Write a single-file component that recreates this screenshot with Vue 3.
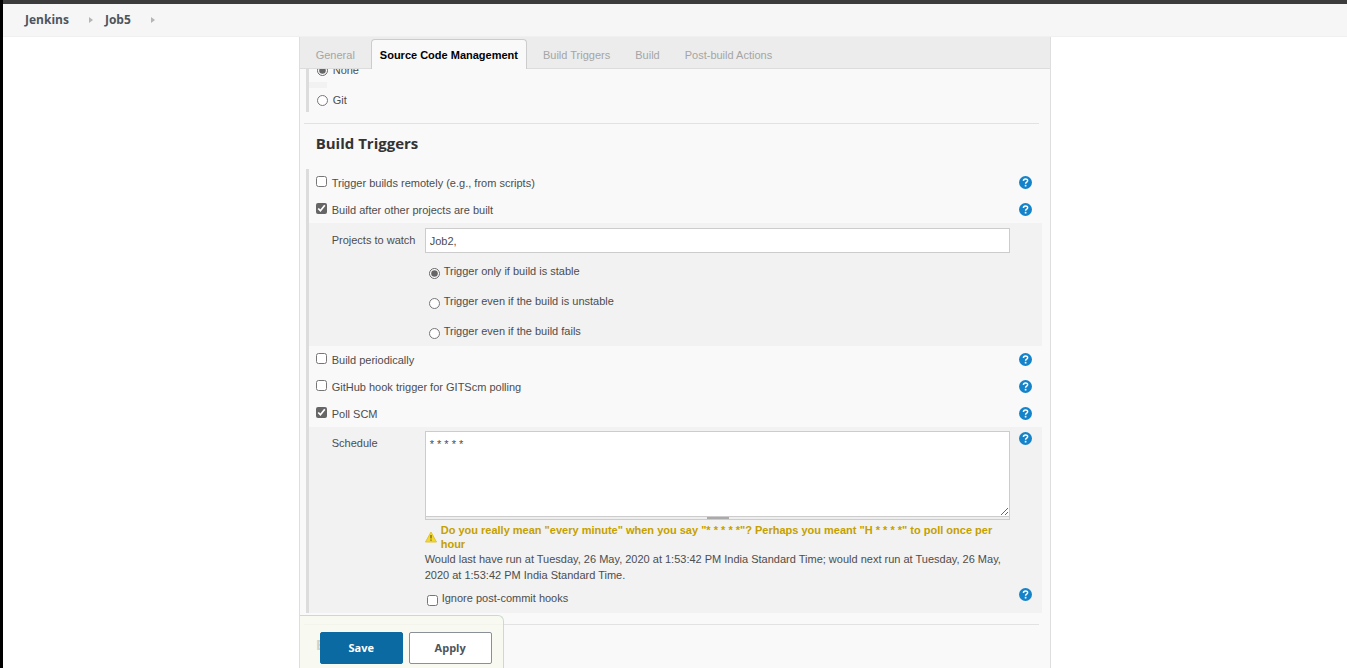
<script setup>
import { ref } from 'vue'

const crumbs = ['Jenkins', 'Job5']
const tabs = ['General', 'Source Code Management', 'Build Triggers', 'Build', 'Post-build Actions']
const activeTab = ref('Source Code Management')
const scm = ref('none')
const remote = ref(false)
const afterOthers = ref(true)
const projects = ref('Job2,')
const threshold = ref('stable')
const thresholds = [
  { id: 'stable', label: 'Trigger only if build is stable' },
  { id: 'unstable', label: 'Trigger even if the build is unstable' },
  { id: 'fails', label: 'Trigger even if the build fails' }
]
const periodic = ref(false)
const github = ref(false)
const poll = ref(true)
const schedule = ref('* * * * *')
const ignoreHooks = ref(false)
</script>

<template>
  <div class="page">
    <svg class="defs" aria-hidden="true">
      <symbol id="help" viewBox="0 0 14 14">
        <circle cx="7" cy="7" r="7" fill="#1583c9" />
        <path d="M4.8 5.3C4.8 2.6 9.3 2.7 9.3 5.1C9.3 6.7 7.1 6.6 7.1 8.4" fill="none" stroke="#fff" stroke-width="1.6" />
        <rect x="6.2" y="9.5" width="1.8" height="1.8" fill="#fff" />
      </symbol>
    </svg>
    <nav class="crumbs">
      <template v-for="c in crumbs" :key="c">
        <a href="#">{{ c }}</a>
        <svg class="arrow" viewBox="0 0 4 6" aria-hidden="true"><path d="M0 0L4 3L0 6Z" /></svg>
      </template>
    </nav>

    <main class="panel">
      <div class="tabs" role="tablist">
        <button
          v-for="t in tabs"
          :key="t"
          type="button"
          role="tab"
          :aria-selected="t === activeTab"
          :class="['tab', { active: t === activeTab }]"
          @click="activeTab = t"
        >{{ t }}</button>
      </div>

      <form class="content" @submit.prevent>
        <section class="group scm">
          <label class="scm-row"><input v-model="scm" type="radio" name="scm" value="none" />None</label>
          <div class="spacer"></div>
          <label class="scm-row"><input v-model="scm" type="radio" name="scm" value="git" />Git</label>
        </section>
        <hr />
        <h2>Build Triggers</h2>

        <section class="group">
          <div class="option">
            <label><input v-model="remote" type="checkbox" />Trigger builds remotely (e.g., from scripts)</label>
            <button type="button" class="help" aria-label="Help"><svg><use href="#help" /></svg></button>
          </div>
          <div class="option">
            <label><input v-model="afterOthers" type="checkbox" />Build after other projects are built</label>
            <button type="button" class="help" aria-label="Help"><svg><use href="#help" /></svg></button>
          </div>
          <div class="nested watch">
            <label class="name" for="projects">Projects to watch</label>
            <div class="field">
              <input id="projects" v-model="projects" class="text" type="text" />
              <label v-for="t in thresholds" :key="t.id" class="choice">
                <input v-model="threshold" type="radio" name="threshold" :value="t.id" />{{ t.label }}
              </label>
            </div>
          </div>
          <div class="option">
            <label><input v-model="periodic" type="checkbox" />Build periodically</label>
            <button type="button" class="help" aria-label="Help"><svg><use href="#help" /></svg></button>
          </div>
          <div class="option">
            <label><input v-model="github" type="checkbox" />GitHub hook trigger for GITScm polling</label>
            <button type="button" class="help" aria-label="Help"><svg><use href="#help" /></svg></button>
          </div>
          <div class="option">
            <label><input v-model="poll" type="checkbox" />Poll SCM</label>
            <button type="button" class="help" aria-label="Help"><svg><use href="#help" /></svg></button>
          </div>
          <div class="nested">
            <label class="name" for="schedule">Schedule</label>
            <div class="field">
              <textarea id="schedule" v-model="schedule"></textarea>
              <div class="grip"><span></span></div>
              <div class="warning">
                <svg viewBox="0 0 12 12" aria-hidden="true">
                  <path d="M6 1L11.5 11H0.5Z" fill="#f3d832" stroke="#dfc33a" stroke-linejoin="round" />
                  <path d="M6 4V7.6M6 8.6V9.8" stroke="#6a5a10" stroke-width="1.2" />
                </svg>
                <strong>Do you really mean "every minute" when you say "* * * * *"? Perhaps you meant "H * * * *" to poll once per hour</strong>
              </div>
              <p>Would last have run at Tuesday, 26 May, 2020 at 1:53:42 PM India Standard Time; would next run at Tuesday, 26 May, 2020 at 1:53:42 PM India Standard Time.</p>
            </div>
            <button type="button" class="help" aria-label="Help"><svg><use href="#help" /></svg></button>
          </div>
          <div class="nested hooks">
            <label class="choice"><input v-model="ignoreHooks" type="checkbox" />Ignore post-commit hooks</label>
            <button type="button" class="help" aria-label="Help"><svg><use href="#help" /></svg></button>
          </div>
        </section>
        <hr />
        <h2>B</h2>

        <div class="actions">
          <button type="submit" class="save">Save</button>
          <button type="button" class="apply">Apply</button>
        </div>
      </form>
    </main>
  </div>
</template>

<style>
body { background: #fff; }
</style>

<style scoped>
* { box-sizing: border-box; }
.page {
  display: flex;
  flex-direction: column;
  height: 100vh;
  overflow: hidden;
  border-left: 3px solid #000;
  font: 11px/16px "Liberation Sans", Arial, sans-serif;
  color: #4d4d4d;
}
.defs { display: none; }
.crumbs {
  display: flex;
  align-items: center;
  flex: none;
  height: 37px;
  padding: 0 22px;
  border-top: 4px solid #3c3c3c;
  border-bottom: 1px solid #f0f0f0;
  background: #f6f6f6;
}
.crumbs a { color: #4d545d; font-family: "Open Sans", sans-serif; font-size: 12px; font-weight: 700; text-decoration: none; }
.arrow { width: 4px; height: 6px; margin: 0 12px 0 20px; fill: #b5b5b5; }
.panel {
  display: flex;
  flex: 1;
  flex-direction: column;
  width: 56%;
  min-height: 0;
  margin: 0 auto;
  border: solid #dedede;
  border-width: 0 1px;
  background: #f9f9f9;
}
.tabs {
  display: flex;
  flex: none;
  height: 32px;
  padding: 2px 7px 0;
  border-bottom: 1px solid #dcdcdc;
  background: #ececec;
}
.tab {
  height: 30px;
  padding: 0 8px;
  border: 1px solid transparent;
  border-bottom: 0;
  background: none;
  color: #a5a5a5;
  font: inherit;
  white-space: nowrap;
}
.tab.active {
  margin: 0 7px;
  border-color: #ccc;
  border-radius: 4px 4px 0 0;
  background: #f9f9f9;
  color: #000;
  font-weight: 700;
}
.tab.active ~ .tab { margin-right: 7px; }
.content {
  position: relative;
  flex: 1;
  min-height: 0;
  overflow: hidden;
}
.group { margin: 0 8px 0 6px; border-left: 3px solid #dcdcdc; }
input[type="checkbox"], input[type="radio"] {
  flex: none;
  width: 11px;
  height: 11px;
  margin: 0;
  accent-color: #666;
}
.scm { margin-top: -11px; }
.scm-row { display: flex; align-items: center; gap: 5px; height: 24px; padding-left: 8px; }
.spacer { width: 18px; height: 6px; background: #f2f2f2; }
hr { height: 1px; margin: 11px 11px 0 4px; border: 0; background: #e2e2e2; }
h2 { margin: 0; padding: 7px 16px 14px; color: #333; font: 700 15px/24px "Open Sans", sans-serif; }
.option {
  display: flex;
  align-items: center;
  justify-content: space-between;
  height: 27px;
  padding: 0 10px 0 7px;
}
.option label { display: flex; align-items: center; gap: 5px; }
.option input { margin-bottom: 2px; }
.help {
  flex: none;
  width: 13px;
  height: 13px;
  margin: 0;
  padding: 0;
  border: 0;
  background: none;
}
.help svg { display: block; width: 13px; height: 13px; }
.nested { display: flex; align-items: flex-start; padding: 4px 10px 0 23px; background: #f2f2f2; }
.watch { padding-top: 5px; padding-right: 32px; }
.name { flex: none; width: 93px; padding-top: 4px; }
.field { flex: 1; min-width: 0; }
.field + .help { margin: 1px 0 0 9px; }
.text, textarea {
  display: block;
  width: 100%;
  border: 1px solid #ccc;
  background: #fff;
  color: #4d4d4d;
  font: inherit;
}
.text { height: 25px; margin-bottom: 3px; padding: 0 4px; }
.choice { display: flex; align-items: center; gap: 4px; height: 30px; padding-left: 4px; }
.choice input { position: relative; top: 2px; }
textarea { height: 86px; padding: 4px; resize: vertical; }
.grip { height: 3px; border: solid #ccc; border-width: 0 1px 1px; background: #eee; }
.grip span { display: block; width: 22px; height: 2px; margin: 0 auto; background: #aaa; }
.warning { display: flex; align-items: center; gap: 4px; margin-top: 3px; color: #c4a000; line-height: 14px; }
.warning svg { flex: none; width: 12px; height: 12px; }
p { margin: 0; }
.hooks { justify-content: space-between; padding: 0 10px 0 118px; }
.hooks .choice { padding-left: 0; }
.hooks .help { margin-top: 5px; }
.actions {
  position: absolute;
  bottom: 0;
  left: 0;
  display: flex;
  gap: 6px;
  padding: 16px 11px 4px 20px;
  border: solid #c9dccb;
  border-width: 1px 1px 0 0;
  border-radius: 0 6px 0 0;
  background: rgba(248, 250, 240, 0.8);
}
.actions button { width: 83px; height: 32px; border-radius: 2px; font: 700 11px/16px "Open Sans", sans-serif; }
.save { border: 1px solid #0b6aa2; background: #0b6aa2; color: #fff; }
.apply { border: 1px solid #8b8f9a; background: #fff; color: #4d545d; }
</style>
